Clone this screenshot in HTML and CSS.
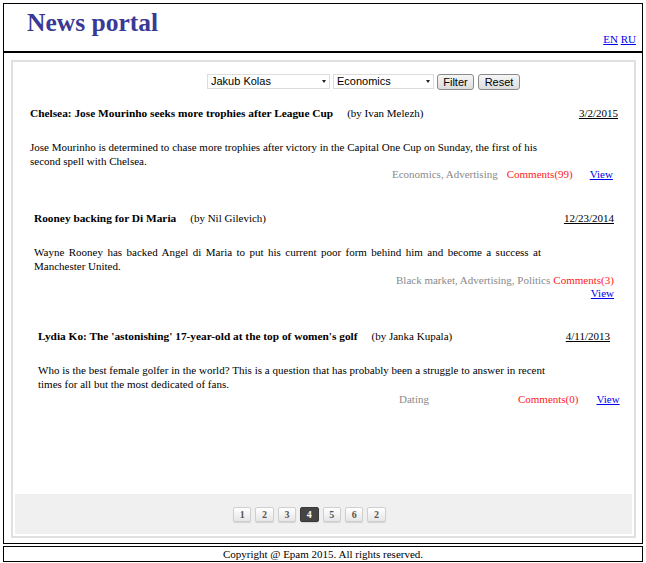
FILE: index.html
```html
<!DOCTYPE html>
<html lang="en">
<head>
<meta charset="utf-8">
<title>News portal</title>
<link rel="stylesheet" href="styles.css">
</head>
<body>
<header class="header">
  <h1 class="logo">News portal</h1>
  <nav class="lang"><a href="#">EN</a> <a href="#">RU</a></nav>
</header>
<main class="main">
  <div class="panel">
    <form class="filter">
      <span class="select select--author"><select><option>Jakub Kolas</option></select></span>
      <span class="select select--tag"><select><option>Economics</option></select></span>
      <button type="button" class="btn btn--filter">Filter</button>
      <button type="button" class="btn btn--reset">Reset</button>
    </form>

    <article class="news news--1">
      <div class="news-head">
        <span class="news-title">Chelsea: Jose Mourinho seeks more trophies after League Cup</span>
        <span class="news-author">(by Ivan Melezh)</span>
        <span class="news-date">3/2/2015</span>
      </div>
      <p class="news-text">Jose Mourinho is determined to chase more trophies after victory in the Capital One Cup on Sunday, the first of his second spell with Chelsea.</p>
      <div class="news-meta meta--1">
        <span class="tags">Economics, Advertising</span>
        <span class="comments">Comments(99)</span>
        <a class="view" href="#">View</a>
      </div>
    </article>

    <article class="news news--2">
      <div class="news-head">
        <span class="news-title">Rooney backing for Di Maria</span>
        <span class="news-author">(by Nil Gilevich)</span>
        <span class="news-date">12/23/2014</span>
      </div>
      <p class="news-text">Wayne Rooney has backed Angel di Maria to put his current poor form behind him and become a success at Manchester United.</p>
      <div class="news-meta meta--2">
        <span class="tags">Black market, Advertising, Politics</span>
        <span class="comments">Comments(3)</span>
      </div>
      <div class="news-view"><a class="view" href="#">View</a></div>
    </article>

    <article class="news news--3">
      <div class="news-head">
        <span class="news-title">Lydia Ko: The 'astonishing' 17-year-old at the top of women's golf</span>
        <span class="news-author">(by Janka Kupala)</span>
        <span class="news-date">4/11/2013</span>
      </div>
      <p class="news-text">Who is the best female golfer in the world? This is a question that has probably been a struggle to answer in recent times for all but the most dedicated of fans.</p>
      <div class="news-meta meta--3">
        <span class="tags">Dating</span>
        <span class="comments">Comments(0)</span>
        <a class="view" href="#">View</a>
      </div>
    </article>

    <div class="pager">
      <a class="page" href="#">1</a>
      <a class="page" href="#">2</a>
      <a class="page" href="#">3</a>
      <a class="page page--active" href="#">4</a>
      <a class="page" href="#">5</a>
      <a class="page" href="#">6</a>
      <a class="page" href="#">2</a>
    </div>
  </div>
</main>
<footer class="footer">Copyright @ Epam 2015. All rights reserved.</footer>
</body>
</html>
```
FILE: styles.css
```css
html, body {
  background: #fff;
}
body {
  margin: 3px;
  font-family: "Liberation Serif", "Times New Roman", serif;
  font-size: 11px;
  color: #000;
}

.header {
  box-sizing: border-box;
  height: 49px;
  border: 1px solid #000;
  padding: 4px 6px 6px 23px;
  display: flex;
  justify-content: space-between;
  align-items: flex-end;
}
.logo {
  align-self: flex-start;
  margin: 0;
  font-size: 25.5px;
  font-weight: bold;
  color: #393996;
  line-height: normal;
}
.lang {
  font-size: 11px;
  line-height: normal;
}
.lang a {
  color: #0000ee;
}

.main {
  box-sizing: border-box;
  height: 492px;
  border: 1px solid #000;
  padding: 7px 6px 5px 7px;
}
.panel {
  box-sizing: border-box;
  height: 100%;
  border: 2px solid #e0e0e0;
  padding: 2px;
  display: flex;
  flex-direction: column;
}

.filter {
  margin: 0;
  padding: 10px 0 0 192px;
  display: flex;
  align-items: center;
  height: 15px;
  box-sizing: content-box;
}
.select {
  position: relative;
  display: block;
  height: 15px;
  margin-right: 3px;
}
.select select {
  appearance: none;
  -webkit-appearance: none;
  box-sizing: border-box;
  width: 100%;
  height: 15px;
  margin: 0;
  padding: 0 0 0 3px;
  border: 1px solid #dcdcdc;
  border-radius: 0;
  background: #fff;
  font-family: "Liberation Sans", Arial, sans-serif;
  font-size: 11px;
  line-height: 13px;
  color: #000;
}
.select::after {
  content: "";
  position: absolute;
  right: 4px;
  top: 6px;
  border-left: 2.5px solid transparent;
  border-right: 2.5px solid transparent;
  border-top: 3px solid #222;
  pointer-events: none;
}
.select--author { width: 123px; }
.select--tag { width: 101px; }

.btn {
  box-sizing: border-box;
  height: 16px;
  margin: 0;
  padding: 0 4px;
  border: 1px solid #8a8a8a;
  border-radius: 3px;
  background: linear-gradient(#f6f6f6, #dcdcdc);
  font-family: "Liberation Sans", Arial, sans-serif;
  font-size: 11px;
  line-height: 14px;
  color: #000;
}
.btn--filter { width: 37px; margin-right: 4px; }
.btn--reset { width: 42px; }

.news {
  line-height: 14px;
}
.news--1 { margin: 17px 14px 0 15px; }
.news--2 { margin: 30px 18px 0 19px; }
.news--3 { margin: 30px 22px 0 23px; }

.news-head {
  display: flex;
  align-items: baseline;
  white-space: nowrap;
}
.news-title {
  font-weight: bold;
  font-size: 11.35px;
}
.news-author {
  margin-left: 14px;
}
.news-date {
  margin-left: auto;
  text-decoration: underline;
}

.news-text {
  margin: 20px 0 0;
  width: 507px;
  text-align: justify;
}

.news-meta {
  display: flex;
  white-space: nowrap;
  line-height: 14px;
  padding-left: 362px;
}
.tags { color: #8a8a8a; }
.comments { color: #ff1a1a; }
.view { color: #0000ee; text-decoration: underline; }

.meta--1 { margin-top: -1px; }
.meta--1 .comments { margin-left: 9px; }
.meta--1 .view { margin-left: 17px; }
.meta--2 .comments { margin-left: 3px; }
.news-view {
  line-height: 12px;
  text-align: right;
}
.meta--3 { padding-left: 361px; margin-right: -8px; margin-top: 1px; }
.meta--3 .comments { margin-left: 89px; }
.meta--3 .view { margin-left: 18px; }

.pager {
  margin-top: auto;
  height: 40px;
  box-sizing: border-box;
  background: #f0f0f0;
  padding: 13px 0 0 218px;
  display: flex;
  gap: 4px;
}
.page {
  box-sizing: border-box;
  width: 18.4px;
  height: 15px;
  border: 1px solid #cfcfcf;
  border-radius: 2px;
  background: linear-gradient(#ffffff, #e6e6e6);
  box-shadow: 0 1px 1px rgba(0,0,0,0.12);
  color: #555;
  font-size: 10px;
  font-weight: bold;
  line-height: 13px;
  text-align: center;
  text-decoration: none;
}
.page--active {
  background: #454545;
  border-color: #3a3a3a;
  color: #fff;
}

.footer {
  margin-top: 2px;
  border: 1px solid #000;
  height: 14px;
  line-height: 14px;
  text-align: center;
  font-size: 11px;
}
```
